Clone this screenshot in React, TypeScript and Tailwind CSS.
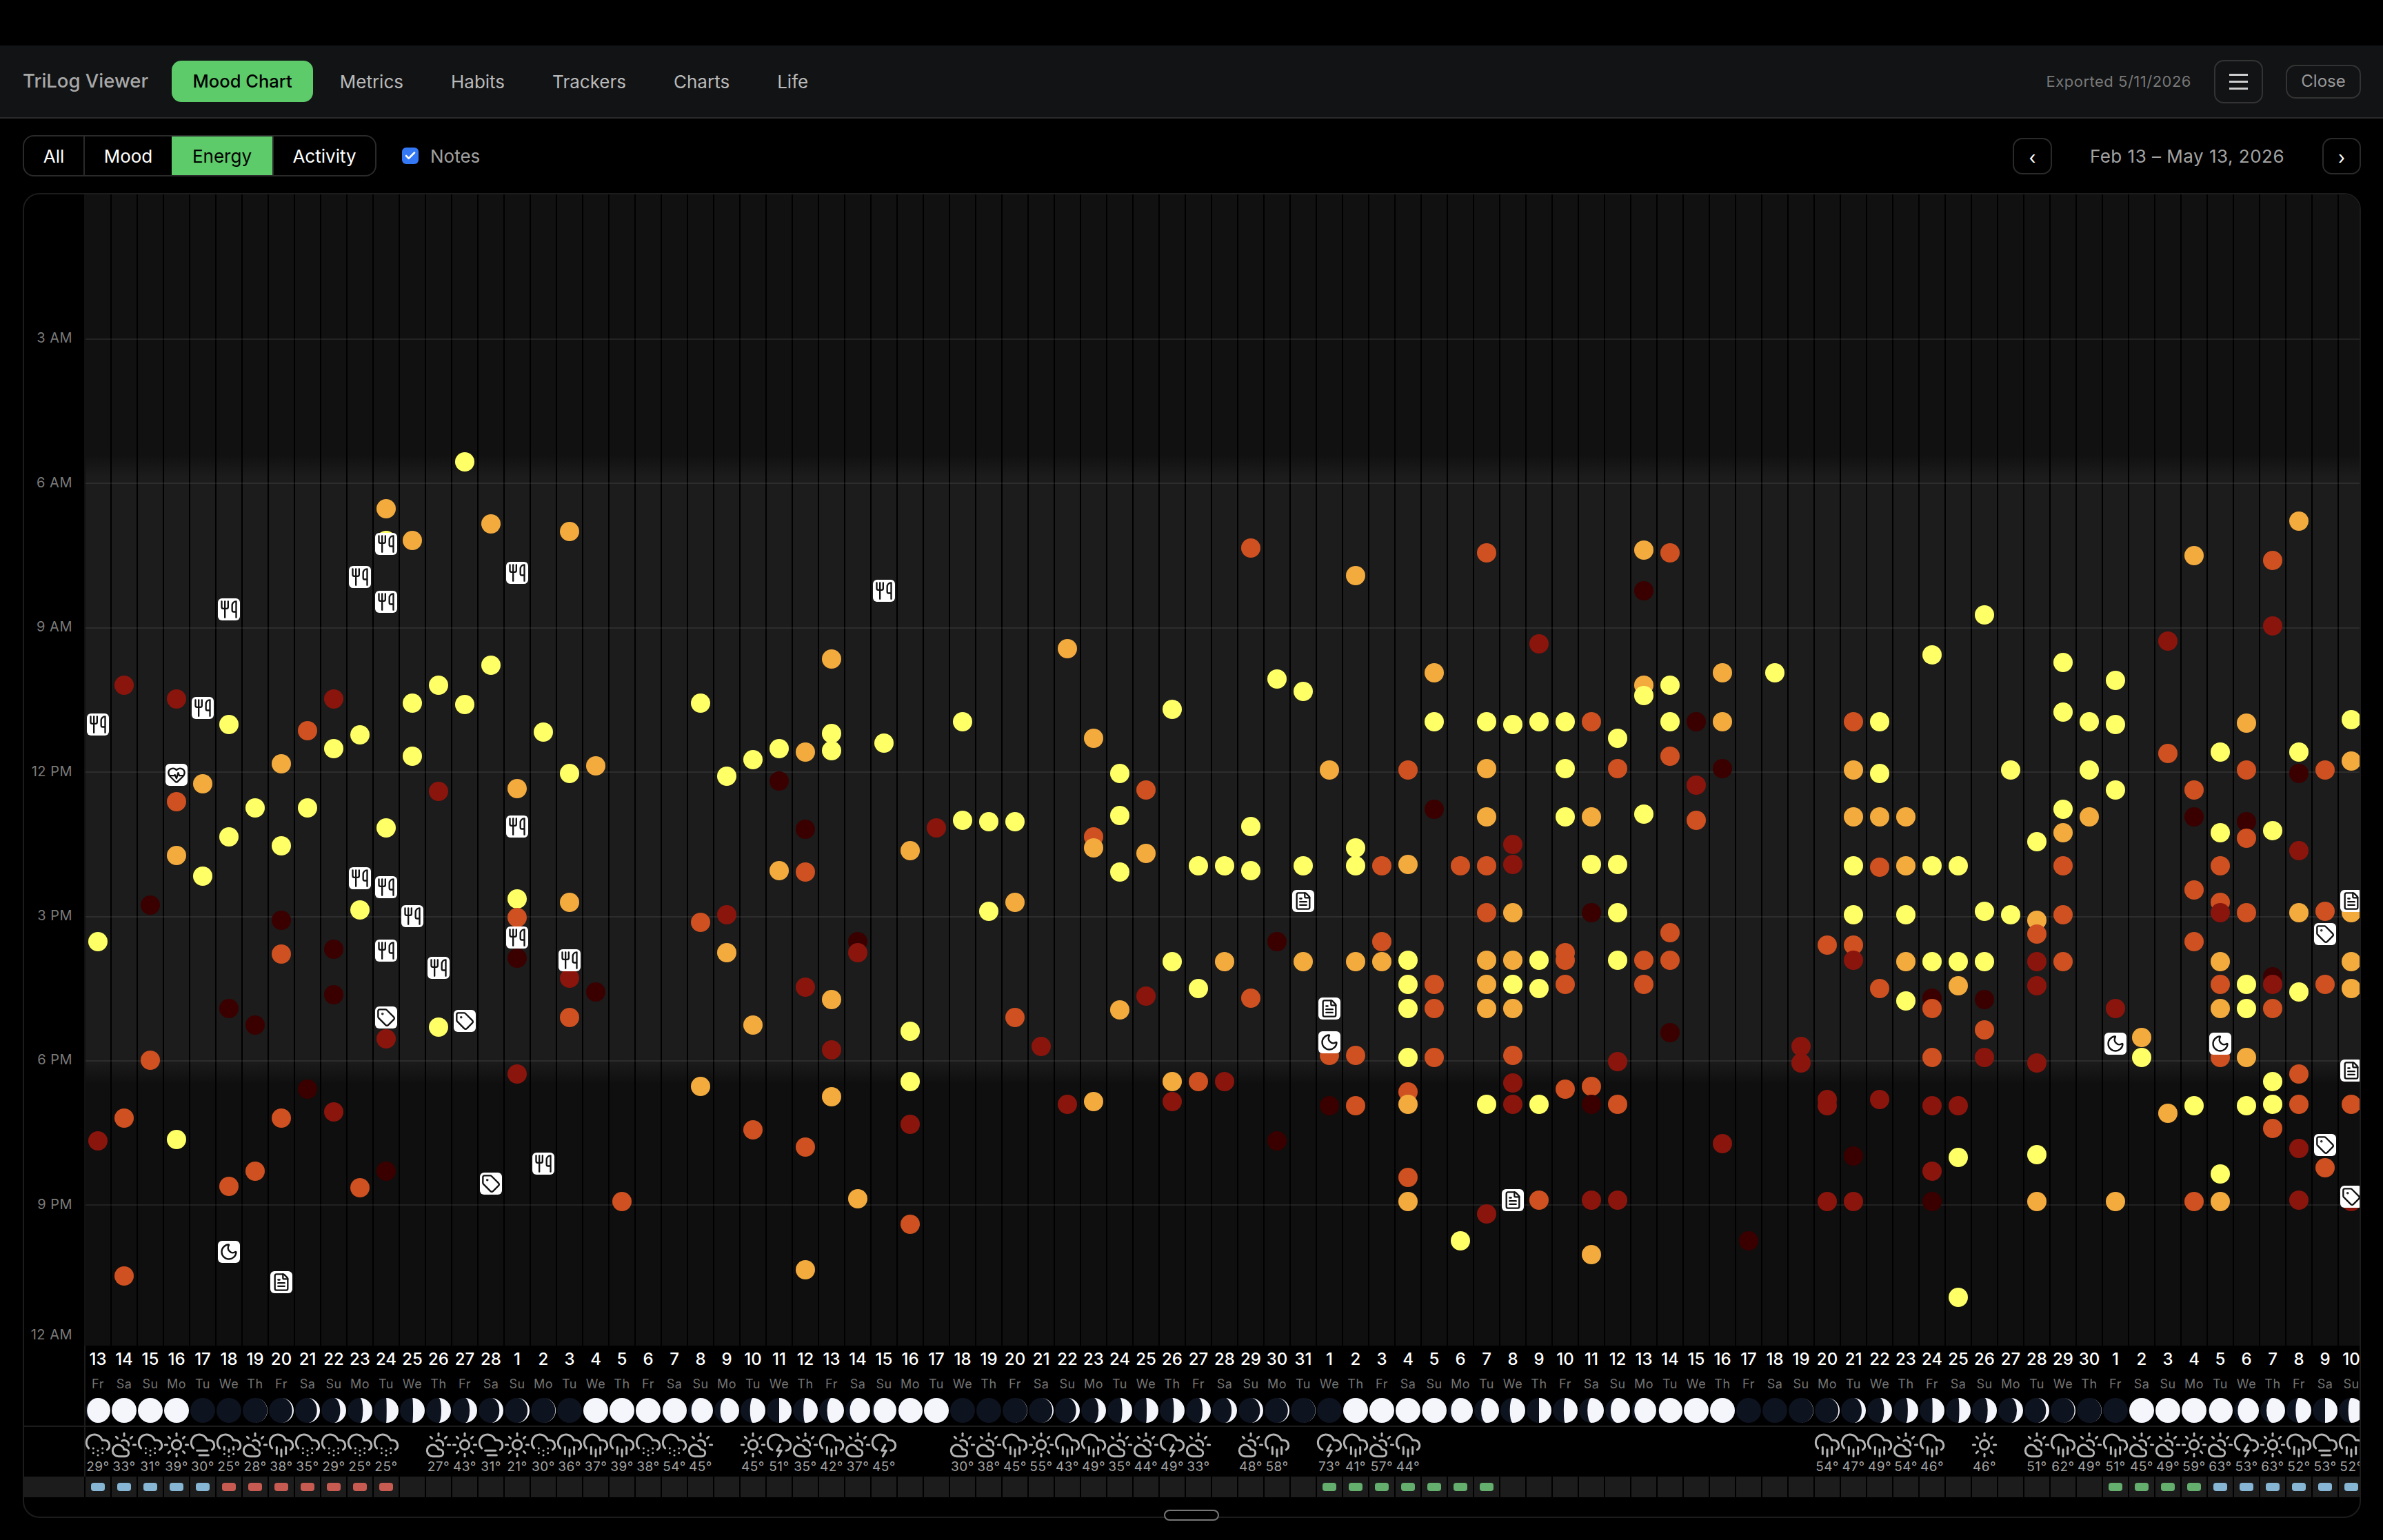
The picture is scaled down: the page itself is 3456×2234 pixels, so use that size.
import { Check, CloudFog, CloudHail, CloudLightning, CloudRain, CloudSnow, CloudSun, FileText, HeartPulse, Moon, Sun, Tag, Utensils } from 'lucide-react'

const NAV = ['Metrics', 'Habits', 'Trackers', 'Charts', 'Life']
const WEEK = ['Fr', 'Sa', 'Su', 'Mo', 'Tu', 'We', 'Th']
const HOURS = ['3 AM', '6 AM', '9 AM', '12 PM', '3 PM', '6 PM', '9 PM']

// chart geometry, reference pixels
const HOUR_H = 69.8
const REF_SCALE = 2.2035
const PLOT_TOP = 282

const DAY_NUMS = [
  ...Array.from({ length: 16 }, (_, i) => i + 13),
  ...Array.from({ length: 31 }, (_, i) => i + 1),
  ...Array.from({ length: 30 }, (_, i) => i + 1),
  ...Array.from({ length: 10 }, (_, i) => i + 1),
]

const MOON = [
  0.94, 1, 1, 1, 0, 0, 0.01, 0.06, 0.12, 0.24, 0.38, 0.48, 0.47, 0.39, 0.3, 0.16, 0.08, 0.02, 0,
  1, 1, 1, 0.97, 0.87, 0.76, 0.62, 0.5, 0.58, 0.68, 0.82, 0.92, 0.97, 1,
  0, 0, 0.01, 0.05, 0.15, 0.3, 0.4, 0.47, 0.43, 0.33, 0.22, 0.13, 0.06, 0.01, 0,
  1, 1, 1, 0.99, 0.88, 0.72, 0.62, 0.5, 0.56, 0.66, 0.78, 0.88, 0.95, 1, 1,
  0, 0, 0.01, 0.05, 0.17, 0.32, 0.42, 0.48, 0.46, 0.37, 0.25, 0.13, 0.04, 0.01, 0,
  1, 1, 1, 0.95, 0.85, 0.75, 0.63, 0.5, 0.62,
]

const WEATHER = (
  's29 c33 s31 u39 f30 h25 c28 r38 s35 s29 s25 s25 - c27 u43 f31 u21 s30 r36 r37 r39 s38 s54 c45 - u45 l51 c35 r42 c37 l45 - - ' +
  'c30 c38 r45 u55 r43 r49 c35 c44 l49 c33 - c48 r58 - l73 r41 c57 r44 - - - - - - - - - - - - - - - ' +
  'r54 r47 r49 c54 r46 - u46 - c51 r62 c49 r51 c45 c49 u59 c63 l53 u63 r52 f53 r52'
).split(' ')

const WEATHER_ICONS = { s: CloudSnow, c: CloudSun, u: Sun, f: CloudFog, h: CloudHail, r: CloudRain, l: CloudLightning }

// Y yellow, O orange, R red-orange, D dark red, K near black
// lowercase: u utensils, h heart, m moon, f file, t tag. numbers are y in overview px
const COLS = [
  'Y620 u477 D751',
  'D451 R736 R840',
  'K596 R698',
  'D460 R528 O563 Y750 h510',
  'O516 Y577 u466',
  'Y477 Y551 K664 R781 u401 m824',
  'Y532 K675 R771',
  'O503 Y557 K606 R628 R736 f844',
  'R481 Y532 K717',
  'D460 Y493 K625 K655 D732',
  'Y484 Y599 R782 u380 u578',
  'O335 Y356 Y545 D684 K771 u358 u396 u584 u626 t670',
  'O356 Y463 Y498 u603',
  'Y451 D521 Y676 u637',
  'Y304 Y464 t672',
  'O345 Y438 t779',
  'O519 Y592 R604 K631 D707 u377 u544 u617',
  'Y482 u766',
  'O350 Y509 O594 D644 R670 u632',
  'O504 K653',
  'R791',
  '',
  '',
  'Y463 R607 O715',
  'Y511 D602 O627',
  'Y500 O675 R744',
  'Y493 K514 O573',
  'O495 K546 R574 D650 R755 O836',
  'O434 Y483 Y494 O658 D691 O722',
  'K620 D627 O789',
  'Y489 u389',
  'O560 Y679 Y712 D740 R806',
  'D545',
  'Y475 Y540',
  'Y541 Y600',
  'Y541 O594 R670',
  'D689',
  'O427 D727',
  'O486 R551 O558 O725',
  'Y509 Y537 Y574 O665',
  'R520 O562 D656',
  'Y467 Y633 D725 O712',
  'Y570 Y651 R712',
  'Y570 O633 D712',
  'R361 Y544 Y573 R657',
  'Y447 K620 K751',
  'Y455 Y570 O633 f593',
  'O507 R695 K728 f664 m686',
  'O379 Y558 Y570 O633 R695 R728',
  'R570 R620 O633',
  'R507 O569 Y632 Y648 Y664 Y696 R719 O727 R775 O791',
  'O443 Y475 K533 R648 R664 R696',
  'R570 Y817',
  'R364 Y475 O506 O538 R570 R601 O632 O648 O664 Y727 D799',
  'Y477 D556 D569 O601 O632 Y648 O664 R695 D713 D727 f790',
  'D424 Y475 Y632 Y651 Y727 R790',
  'Y475 Y506 Y538 R627 R632 R648 R717',
  'R475 O538 Y569 K601 R715 K727 D790 O826',
  'Y486 R506 Y569 Y601 Y632 D699 R727 D790',
  'O362 K389 O451 Y458 Y536 R632 R648',
  'R364 Y451 Y475 R498 R614 R632 K680',
  'K475 D517 R540',
  'O443 O475 K506 D753',
  'K817',
  'Y443',
  'D689 D700',
  'R622 D724 D728 D791',
  'R475 O507 O538 Y570 Y602 R622 D632 K761 D791',
  'Y475 Y509 O538 R571 R651 D724',
  'O538 O570 Y602 O633 Y659',
  'Y431 Y570 Y633 K657 R664 R696 D728 D771 K791',
  'Y570 Y633 O649 D728 Y762 Y854',
  'Y405 Y600 Y633 K658 R678 D696',
  'Y507 Y602',
  'Y554 O606 R615 D633 D649 D700 Y760 O791',
  'Y436 Y469 Y533 O548 R570 R602 R633',
  'Y475 Y507 O538',
  'Y448 Y477 Y520 D664 O791 m687',
  'O683 Y696',
  'D422 R496 O733',
  'O366 R520 K538 R586 R620 Y728 R791',
  'Y495 Y548 R570 R594 D601 O633 R648 O664 R696 Y773 O791 m687',
  'O476 R507 K541 R552 R601 Y648 Y664 O696 Y728',
  'R369 D412 Y547 K643 D648 R664 Y712 Y727 R743',
  'O343 Y495 K509 D560 O601 Y653 R707 R727 D756 D790',
  'R507 R600 R648 R769 t615 t754',
  'Y474 O501 O601 O633 O651 R727 D791 f593 f705 t788',
]

const DOT_COLORS: Record<string, string> = {
  Y: 'bg-[#ffff66]',
  O: 'bg-[#f4ab3e]',
  R: 'bg-[#cf5020]',
  D: 'bg-[#8a150d]',
  K: 'bg-[#3a0000]',
}

const CHIP_ICONS = { u: Utensils, h: HeartPulse, m: Moon, f: FileText, t: Tag }

function stripColor(i: number) {
  if (i <= 4 || i >= 81) return 'bg-[#86b6d4]'
  if (i <= 11) return 'bg-[#c75b52]'
  if ((i >= 47 && i <= 53) || (i >= 77 && i <= 80)) return 'bg-[#64ae6e]'
  return ''
}

function MoonPhase({ lit }: { lit: number }) {
  const rx = Math.abs(1 - 2 * lit) * 18
  const sweep = lit < 0.5 ? 0 : 1
  return (
    <svg viewBox="-18 -18 36 36" className="h-[36px] w-[36px]">
      <circle r="18" fill="#0e1320" />
      {lit > 0 && <path d={`M0,-18 A18,18 0 0 1 0,18 A${rx},18 0 0 ${sweep} 0,-18 Z`} fill="#f5f6fb" />}
    </svg>
  )
}

function Entry({ token }: { token: string }) {
  const kind = token[0]
  const y = Number(token.slice(1)) * REF_SCALE - PLOT_TOP
  const Icon = CHIP_ICONS[kind as keyof typeof CHIP_ICONS]
  if (Icon) {
    return (
      <div
        className="absolute left-[2px] z-20 flex h-[32px] w-[32px] items-center justify-center rounded-[6px] bg-white text-[#111]"
        style={{ top: y - 16 }}
      >
        <Icon size={28} strokeWidth={2} />
      </div>
    )
  }
  return (
    <div
      className={`absolute left-[4px] z-10 h-[28px] w-[28px] rounded-full ${DOT_COLORS[kind]}`}
      style={{ top: y - 14 }}
    />
  )
}

function TopBar() {
  return (
    <header className="flex h-[106px] items-center border-b-2 border-[#2a2a2a] bg-[#121315] pl-[33px] pr-[32px]">
      <span className="mr-[34px] text-[27.5px] font-medium text-[#a8a8a8]">TriLog Viewer</span>
      <nav className="flex items-center gap-2 text-[26px]">
        <button className="flex h-[60px] items-center rounded-[14px] bg-[#5dcb6a] px-[30.5px] text-[25.5px] font-medium text-black">Mood Chart</button>
        {NAV.map((item) => (
          <button key={item} className="flex h-[60px] items-center px-[30.5px] text-[#b9b9b9]">
            {item}
          </button>
        ))}
      </nav>
      <div className="ml-auto flex items-center">
        <span className="text-[22px] tracking-[0.5px] text-[#787878]">Exported 5/11/2026</span>
        <button className="ml-[33px] flex h-[63px] w-[71px] flex-col items-center justify-center gap-[7px] rounded-[14px] border-2 border-[#333] ">
          <span className="h-[3px] w-[27px] bg-[#cfcfcf]" />
          <span className="h-[3px] w-[27px] bg-[#cfcfcf]" />
          <span className="h-[3px] w-[27px] bg-[#cfcfcf]" />
        </button>
        <button className="ml-[33px] h-[49px] w-[109px] rounded-[14px] border-2 border-[#333] text-[24px] text-[#999]">
          Close
        </button>
      </div>
    </header>
  )
}

function FilterBar() {
  return (
    <div className="flex h-[108px] items-center pl-[33px] pr-[32px]">
      <div className="flex h-[60px] w-[513px] overflow-hidden rounded-[16px] border-2 border-[#2a2a2a] text-[26px] font-normal text-white">
        <button className="w-[88px] border-r-2 border-[#2a2a2a]">All</button>
        <button className="w-[126px]">Mood</button>
        <button className="w-[146px] bg-[#5dcb6a] text-black">Energy</button>
        <button className="flex-1 border-l-2 border-[#2a2a2a]">Activity</button>
      </div>
      <span className="ml-[37px] flex h-[24px] w-[24px] items-center justify-center rounded-[6px] bg-[#3478f6] text-white">
        <Check size={18} strokeWidth={3.5} />
      </span>
      <span className="ml-[17px] text-[26px] text-[#a0a0a0]">Notes</span>
      <div className="ml-auto flex items-center text-[26px] text-[#a3a3a3]">
        <button className="flex h-[53px] w-[57px] items-center justify-center rounded-[14px] border-2 border-[#2a2a2a] pt-[4px] text-white">
          ‹
        </button>
        <span className="w-[392px] text-center tracking-[0.5px]">Feb 13 – May 13, 2026</span>
        <button className="flex h-[53px] w-[56px] items-center justify-center rounded-[14px] border-2 border-[#2a2a2a] pt-[4px] text-white">
          ›
        </button>
      </div>
    </div>
  )
}

function Plot() {
  return (
    <div className="flex h-[1670px]">
      <div className="relative w-[87px] shrink-0 text-[20px] tracking-[0.5px] text-[#7a7a7a]">
        {HOURS.map((label, i) => (
          <span
            key={label}
            className="absolute right-[17px] -translate-y-1/2 leading-none"
            style={{ top: (i + 1) * 3 * HOUR_H - 1 }}
          >
            {label}
          </span>
        ))}
        <span className="absolute bottom-[6px] right-[17px] leading-none">12 AM</span>
      </div>
      <div className="relative flex-1 overflow-hidden border-l-2 border-[#111] bg-[linear-gradient(to_bottom,#111111_0,#111111_378px,#1c1c1c_410px,#1c1c1c_1256px,#0f0f0f_1290px,#0f0f0f_100%)]">
        <div className="flex h-full">
          {COLS.map((col, i) => (
            <div key={i} className="relative h-full w-[38px] shrink-0 border-r-2 border-black">
              {col
                .split(' ')
                .filter(Boolean)
                .map((token, j) => (
                  <Entry key={j} token={token} />
                ))}
            </div>
          ))}
        </div>
        {HOURS.map((label, i) => (
          <div
            key={label}
            className="absolute inset-x-0 z-[5] h-[2px] bg-white/[0.08]"
            style={{ top: (i + 1) * 3 * HOUR_H - 0.5 }}
          />
        ))}
      </div>
    </div>
  )
}

function DayRows() {
  return (
    <>
      <div className="flex h-[118px] border-b-2 border-[#1c1c1c]">
        <div className="w-[89px] shrink-0 border-r-2 border-[#1c1c1c]" />
        {DAY_NUMS.map((num, i) => (
          <div key={i} className="flex w-[38px] shrink-0 flex-col items-center pr-[2px]">
            <span className="mt-[8px] h-[24px] text-[24px] font-medium leading-[24px] text-white">{num}</span>
            <span className="mt-[13px] h-[22px] text-[18px] leading-[22px] tracking-[0.5px] text-[#737373]">{WEEK[i % 7]}</span>
            <div className="mt-[9px]">
              <MoonPhase lit={MOON[i]} />
            </div>
          </div>
        ))}
      </div>
      <div className="flex h-[72px]">
        <div className="w-[89px] shrink-0 border-r-2 border-[#1c1c1c]" />
        {WEATHER.map((w, i) => {
          const Icon = WEATHER_ICONS[w[0] as keyof typeof WEATHER_ICONS]
          return (
            <div key={i} className="flex w-[38px] shrink-0 flex-col items-center pr-[2px]">
              {Icon && (
                <>
                  <Icon size={40} strokeWidth={1.8} className="mt-[6px] shrink-0 text-[#b4b4b4]" />
                  <span className="mt-[1px] whitespace-nowrap text-[19px] leading-[22px] tracking-[0.5px] text-[#a3a3a3]">{w.slice(1)}°</span>
                </>
              )}
            </div>
          )
        })}
      </div>
      <div className="flex h-[30px] bg-[#1c1c1c]">
        <div className="w-[89px] shrink-0 border-r-2 border-black" />
        {DAY_NUMS.map((_, i) => (
          <div key={i} className="flex w-[38px] shrink-0 items-center justify-center border-r-2 border-black">
            <span className={`h-[12px] w-[20px] rounded-[4px] ${stripColor(i)}`} />
          </div>
        ))}
      </div>
    </>
  )
}

export default function App() {
  return (
    <div className="relative h-[2234px] overflow-hidden bg-black pt-[66px] font-[family-name:Inter,sans-serif]">
      <TopBar />
      <FilterBar />
      <section className="mx-[33px] mr-[32px] h-[1922px] overflow-hidden rounded-[24px] border-2 border-[#1c1c1c]">
        <Plot />
        <DayRows />
      </section>
      <div className="absolute left-[1688px] top-[2190px] h-[16px] w-[80px] rounded-full border-2 border-[#777] bg-black" />
    </div>
  )
}
